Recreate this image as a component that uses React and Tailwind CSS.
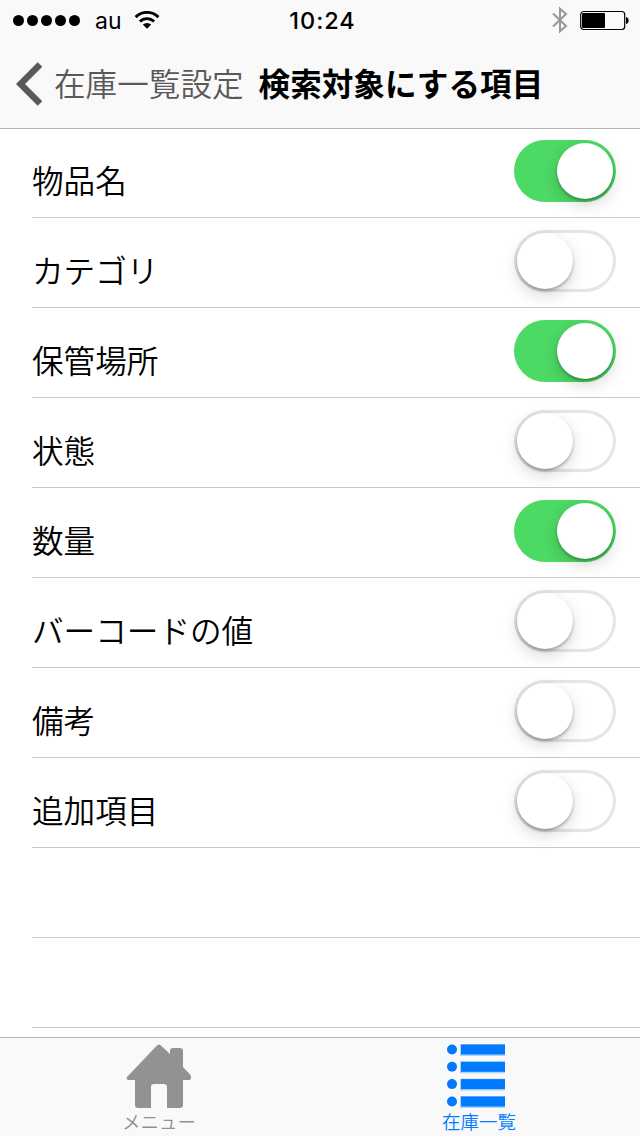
import { useState } from "react";

const initialItems = [
  { label: "物品名", on: true },
  { label: "カテゴリ", on: false },
  { label: "保管場所", on: true },
  { label: "状態", on: false },
  { label: "数量", on: true },
  { label: "バーコードの値", on: false },
  { label: "備考", on: false },
  { label: "追加項目", on: false },
];

function StatusBar() {
  return (
    <div className="grid grid-cols-3 items-center h-10 pl-[13px] pr-3 font-['Inter',sans-serif] text-black">
      <div className="flex items-center">
        <div className="flex gap-[3px]">
          {[1, 2, 3, 4, 5].map((dot) => (
            <span key={dot} className="size-[11px] rounded-full bg-black" />
          ))}
        </div>
        <span className="ml-[15px] pt-px text-[23px] leading-10">au</span>
        <svg className="ml-3 -mt-0.5" width="26" height="18" viewBox="0 0 26 18" fill="none" stroke="#000" strokeWidth="2.9">
          <path d="M1.600 6.100a16.200 16.200 0 0 1 22.800 0" />
          <path d="M5.900 10.600a10 10 0 0 1 14.200 0" />
          <path d="M13 17.800l-4.200-4.200a6 6 0 0 1 8.400 0z" fill="#000" stroke="none" />
        </svg>
      </div>
      <span className="pl-1 text-center text-[23.500px] leading-10 font-medium tracking-[1px]">10:24</span>
      <div className="flex items-center justify-end">
        <svg className="-mt-0.5" width="16" height="28" viewBox="0 0 16 28" fill="none" stroke="#979797" strokeWidth="2">
          <path d="M1 7.500L14 20L8 25.300V2.700L14 8L1 20.500" />
        </svg>
        <svg className="ml-3 mr-[-1px] -mt-0.5" width="49" height="20" viewBox="0 0 49 20">
          <rect x="0.700" y="1.500" width="44" height="18" rx="3" fill="none" stroke="#000" strokeWidth="1.2" />
          <rect x="2" y="3" width="23" height="15" rx="1" />
          <path d="M46 7c2 .3 2.600 1.600 2.600 3.500s-.6 3.200-2.600 3.500z" />
        </svg>
      </div>
    </div>
  );
}

function Toggle({ on, onClick }) {
  return (
    <button
      onClick={onClick}
      className={`flex items-center w-[102px] h-[62px] mt-3 px-[3px] rounded-full ${
        on ? "justify-end bg-[#4cd964]" : "justify-start bg-white shadow-[inset_0_0_0_3px_#e5e5e5]"
      }`}
    >
      <span className="size-14 rounded-full bg-white shadow-[0_6px_16px_rgba(0,0,0,0.16),0_2px_3px_rgba(0,0,0,0.28)]" />
    </button>
  );
}

export default function App() {
  const [items, setItems] = useState(initialItems);

  const handleToggle = (idx) => {
    setItems(items.map((item, i) => (i === idx ? { ...item, on: !item.on } : item)));
  };

  return (
    <div className="flex flex-col w-[640px] h-[1136px] overflow-hidden bg-white font-['Noto_Sans_CJK_JP',sans-serif]">
      {/* Header */}
      <header className="h-32 shrink-0 bg-[#f9f9f9] shadow-[0_1px_0_#b2b2b2]">
        <StatusBar />
        <div className="flex items-center h-[88px] pl-4">
          <svg width="27" height="44" viewBox="0 0 27 44" fill="none" stroke="#595959" strokeWidth="6.5">
            <path d="M24 2.500L4.500 22L24 41.500" />
          </svg>
          <span className="ml-[11px] pb-0.5 text-[31.600px] font-[350] leading-none text-[#595959]">在庫一覧設定</span>
          <h1 className="ml-[15px] pb-0.5 text-[31.600px] font-bold leading-none text-black">検索対象にする項目</h1>
        </div>
      </header>

      {/* Settings */}
      <main className="flex-1 overflow-hidden">
        {items.map((item, idx) => (
          <div key={item.label} className="flex justify-between h-[90px] ml-8 pr-6 border-b border-[#c8c7cc]">
            <span className="pt-[13px] text-[31.600px] font-[350] leading-[76px] text-black">{item.label}</span>
            <Toggle on={item.on} onClick={() => handleToggle(idx)} />
          </div>
        ))}
        <div className="h-[90px] ml-8 border-b border-[#c8c7cc]" />
        <div className="h-[90px] ml-8 border-b border-[#c8c7cc]" />
      </main>

      {/* Tab bar */}
      <nav className="grid grid-cols-2 h-[99px] shrink-0 border-t border-[#b2b2b2] bg-[#f9f9f9] text-[18.500px] font-[350] leading-none">
        <div className="flex flex-col items-center pt-1.5 pr-0.5 text-[#929292]">
          <svg width="66" height="64" viewBox="0 0 66 64" fill="#929292">
            <path d="M1 33L30.500 2Q33 -1 35.500 2L44 10V7Q44 4 47 4H54Q57 4 57 7V23L64 30.500Q66 33 64 36H57V61Q57 64 54 64H41V43Q41 40 38 40H28Q25 40 25 43V64H12Q9 64 9 61V36H2Q0 35 1 33Z" />
          </svg>
          <span className="mt-1">メニュー</span>
        </div>
        <div className="flex flex-col items-center pt-1.5 pr-0.5 text-[#007aff]">
          <svg className="-ml-1.5" width="58" height="64" viewBox="0 0 58 64" fill="#007aff">
            {[0, 17.3, 34.6, 52].map((y) => (
              <g key={y}>
                <circle cx="5" cy={y + 5.5} r="5" />
                <rect x="13" y={y} width="45" height="12" opacity="0.3" />
                <rect x="14" y={y + 0.5} width="44" height="10" />
              </g>
            ))}
          </svg>
          <span className="mt-1">在庫一覧</span>
        </div>
      </nav>
    </div>
  );
}
